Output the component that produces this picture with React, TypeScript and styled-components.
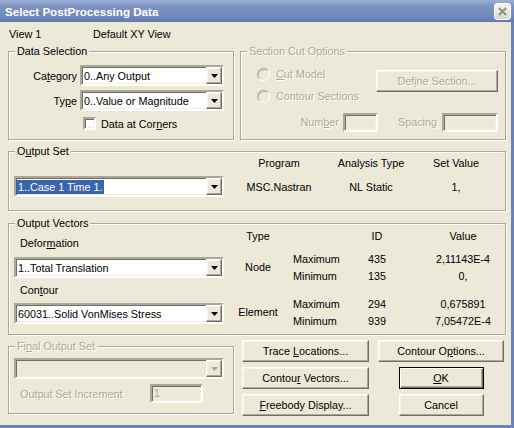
import React from "react";
import styled, { createGlobalStyle, css } from "styled-components";

const GlobalStyle = createGlobalStyle`
  html, body {
    margin: 0;
    padding: 0;
    background: #ece9d8;
  }
  body {
    font-family: "Liberation Sans", Arial, sans-serif;
    font-size: 10.8px;
    color: #000;
  }
  * {
    box-sizing: border-box;
  }
`;

const sunken = css`
  border-style: solid;
  border-width: 2px;
  border-color: #aca899 #fff #fff #aca899;
  box-shadow: inset 1px 1px 0 #716f64, inset -1px -1px 0 #f1efe2;
`;

const raised = css`
  border: 1px solid;
  border-color: #fff #716f64 #716f64 #fff;
  box-shadow: inset -1px -1px 0 #aca899, inset 1px 1px 0 #f4f3ee;
  background: #ece9d8;
`;

const disabledText = css`
  color: #aca899;
  text-shadow: 1px 1px 0 #fff;
`;

const Window = styled.div`
  width: 514px;
  height: 428px;
  display: flex;
  flex-direction: column;
  overflow: hidden;
`;

const TitleBar = styled.div`
  flex: none;
  height: 22px;
  display: flex;
  align-items: center;
  justify-content: space-between;
  padding: 0 3px 0 5px;
  background: linear-gradient(180deg, #9cafd5 0%, #7d93c2 30%, #7088ba 75%, #6179ad 100%);
  color: #fff;
  font-weight: bold;
  font-size: 11.6px;
`;

const CloseBox = styled.div`
  width: 17px;
  height: 17px;
  border: 1px solid #fff;
  border-radius: 3px;
  background: linear-gradient(180deg, #f8f7f3, #d9d6c9);
  display: flex;
  align-items: center;
  justify-content: center;
`;

const Body = styled.div`
  flex: 1;
  display: flex;
  flex-direction: column;
  padding: 0 5px 0 8px;
  background: #ece9d8;
  border-right: 3px solid #6b83b6;
  border-bottom: 3px solid #6b83b6;
`;

const ViewRow = styled.div`
  flex: none;
  height: 23px;
  display: flex;
  align-items: center;
  padding-left: 1px;
  line-height: 12px;
`;

const ViewName = styled.span`
  width: 84px;
`;

const Row = styled.div<{ $top?: number; $gap?: number }>`
  flex: none;
  display: flex;
  gap: ${(p) => p.$gap ?? 6}px;
  margin-top: ${(p) => p.$top ?? 0}px;
`;

const Group = styled.fieldset<{ $w?: number; $h: number; $top?: number; $grow?: boolean }>`
  margin: ${(p) => p.$top ?? 0}px 0 0 0;
  padding: 0;
  min-width: 0;
  flex: ${(p) => (p.$grow ? "1" : "none")};
  width: ${(p) => (p.$w ? `${p.$w}px` : "auto")};
  height: ${(p) => p.$h}px;
  border: 1px solid #aca899;
  box-shadow: inset 1px 1px 0 #fff, 1px 1px 0 #fff;
`;

const Legend = styled.legend<{ $off?: boolean }>`
  margin-left: 6px;
  padding: 0 2px;
  line-height: 12px;
  background: #ece9d8;
  ${(p) => p.$off && disabledText}
`;

const Key = styled.span`
  text-decoration: underline;
  text-underline-offset: 1px;
`;

/* ---------- combo box ---------- */

const ComboFrame = styled.div<{ $w: number; $off?: boolean }>`
  ${sunken}
  width: ${(p) => p.$w}px;
  height: 21px;
  display: flex;
  align-items: stretch;
  background: ${(p) => (p.$off ? "#ece9d8" : "#fff")};
`;

const ComboText = styled.div<{ $sel?: boolean }>`
  flex: 1;
  display: flex;
  align-items: center;
  padding-left: ${(p) => (p.$sel ? 0 : 2)}px;
  white-space: nowrap;
  overflow: hidden;
`;

const Highlight = styled.span`
  background: #3a64ac;
  color: #fff;
  line-height: 14px;
  padding: 0 1px 0 2px;
`;

const DropButton = styled.div`
  ${raised}
  width: 16px;
  display: flex;
  align-items: center;
  justify-content: center;
`;

function Combo({
  width,
  text,
  selected,
  off,
}: {
  width: number;
  text?: string;
  selected?: boolean;
  off?: boolean;
}) {
  return (
    <ComboFrame $w={width} $off={off}>
      <ComboText $sel={selected}>
        {selected ? <Highlight>{text}</Highlight> : <span>{text}</span>}
      </ComboText>
      <DropButton>
        <svg width="7" height="4" viewBox="0 0 7 4">
          <path d="M0 0h7L3.5 4z" fill={off ? "#aca899" : "#000"} />
        </svg>
      </DropButton>
    </ComboFrame>
  );
}

/* ---------- data selection ---------- */

const FieldGrid = styled.div`
  display: grid;
  grid-template-columns: 68px 144px;
  column-gap: 3px;
  row-gap: 4px;
  padding-top: 8px;
  align-items: center;
`;

const FieldLabel = styled.span`
  text-align: right;
`;

const CheckRow = styled.div`
  grid-column: 2;
  display: flex;
  align-items: center;
  gap: 5px;
  padding-left: 3px;
  margin-top: 2px;
`;

const CheckBox = styled.div`
  ${sunken}
  width: 13px;
  height: 13px;
  background: #fff;
`;

/* ---------- section cut ---------- */

const SectionGrid = styled.div`
  display: grid;
  grid-template-columns: 1fr 122px;
  grid-template-rows: 44px 20px;
  row-gap: 5px;
  padding: 6px 7px 0 16px;
`;

const RadioList = styled.div`
  display: flex;
  flex-direction: column;
`;

const RadioRow = styled.div`
  height: 22px;
  display: flex;
  align-items: center;
  gap: 6px;
  ${disabledText}
`;

const Radio = styled.div`
  width: 13px;
  height: 13px;
  border-radius: 50%;
  border: 1px solid;
  border-color: #aca899 #fff #fff #aca899;
  box-shadow: inset 1px 1px 0 #c9c6b6;
  background: #ece9d8;
`;

const Button = styled.button<{ $w?: number; $default?: boolean; $off?: boolean; $top?: number }>`
  ${raised}
  font: inherit;
  color: #000;
  padding: 0;
  margin-top: ${(p) => p.$top ?? 0}px;
  width: ${(p) => (p.$w ? `${p.$w}px` : "100%")};
  height: 22px;
  justify-self: center;
  ${(p) => p.$off && disabledText}
  ${(p) =>
    p.$default &&
    css`
      border: 1px solid #000;
      box-shadow: inset 1px 1px 0 #fff, inset -1px -1px 0 #716f64, inset -2px -2px 0 #aca899;
    `}
`;

const SpinRow = styled.div`
  grid-column: 1 / span 2;
  display: flex;
  justify-content: flex-end;
  align-items: center;
  ${disabledText}
`;

const SmallInput = styled.div<{ $w: number; $gap?: number }>`
  ${sunken}
  width: ${(p) => p.$w}px;
  height: 19px;
  margin-left: ${(p) => p.$gap ?? 4}px;
  background: #ece9d8;
  padding-left: 2px;
  line-height: 15px;
  color: #aca899;
  text-shadow: none;
`;

const Spacer = styled.span<{ $w: number }>`
  width: ${(p) => p.$w}px;
`;

/* ---------- output set ---------- */

const SetGrid = styled.div`
  display: grid;
  grid-template-columns: 210px 110px 74px 96px;
  grid-template-rows: 12px 21px;
  row-gap: 7px;
  padding-left: 5px;
  align-items: center;
  text-align: center;
  line-height: 12px;
`;

/* ---------- output vectors ---------- */

const VectorsBody = styled.div`
  display: flex;
  padding-left: 5px;
`;

const VectorStack = styled.div`
  width: 210px;
  display: flex;
  flex-direction: column;
`;

const StackLabel = styled.div<{ $top: number }>`
  margin-top: ${(p) => p.$top}px;
  padding-left: 6px;
  line-height: 12px;
`;

const StackItem = styled.div<{ $top: number }>`
  margin-top: ${(p) => p.$top}px;
`;

const ResultStack = styled.div`
  margin-left: 11px;
  display: flex;
  flex-direction: column;
`;

const ResultGrid = styled.div<{ $rows: string; $top: number }>`
  display: grid;
  grid-template-columns: 58px 59px 50px 103px;
  grid-template-rows: ${(p) => p.$rows};
  margin-top: ${(p) => p.$top}px;
  align-items: center;
  line-height: 12px;
`;

const TypeCell = styled.div<{ $span?: boolean }>`
  grid-column: 1;
  grid-row: ${(p) => (p.$span ? "1 / span 2" : "1")};
  text-align: center;
  padding-right: 12px;
`;

const KindCell = styled.div`
  grid-column: 2;
`;

const IdCell = styled.div`
  grid-column: 3;
  text-align: center;
`;

const ValueCell = styled.div`
  grid-column: 4;
  text-align: center;
  padding-left: 19px;
`;

/* ---------- bottom ---------- */

const FinalBody = styled.div`
  padding: 6px 0 0 5px;
  display: flex;
  flex-direction: column;
  gap: 5px;
`;

const IncrementRow = styled.div`
  display: flex;
  align-items: center;
  ${disabledText}
`;

const IncrementLabel = styled.span`
  width: 136px;
  padding-left: 6px;
`;

const ButtonGrid = styled.div`
  display: grid;
  grid-template-columns: 127px 126px;
  grid-template-rows: repeat(3, 22px);
  column-gap: 9px;
  row-gap: 5px;
  margin-left: 1px;
`;

const stats = [
  {
    type: "Node",
    rows: [
      { kind: "Maximum", id: "435", value: "2,11143E-4" },
      { kind: "Minimum", id: "135", value: "0," },
    ],
    top: 8,
  },
  {
    type: "Element",
    rows: [
      { kind: "Maximum", id: "294", value: "0,675891" },
      { kind: "Minimum", id: "939", value: "7,05472E-4" },
    ],
    top: 11,
  },
];

export default function App() {
  return (
    <>
      <GlobalStyle />
      <Window>
        <TitleBar>
          <span>Select PostProcessing Data</span>
          <CloseBox>
            <svg width="9" height="9" viewBox="0 0 9 9">
              <path d="M1 1L8 8M8 1L1 8" stroke="#8e8e8a" strokeWidth="2" />
            </svg>
          </CloseBox>
        </TitleBar>

        <Body>
          <ViewRow>
            <ViewName>View 1</ViewName>
            <span>Default XY View</span>
          </ViewRow>

          <Row $gap={6}>
            <Group $w={226} $h={95}>
              <Legend>Data Selection</Legend>
              <FieldGrid>
                <FieldLabel>
                  Ca<Key>t</Key>egory
                </FieldLabel>
                <Combo width={144} text="0..Any Output" />
                <FieldLabel>
                  Ty<Key>p</Key>e
                </FieldLabel>
                <Combo width={144} text="0..Value or Magnitude" />
                <CheckRow>
                  <CheckBox />
                  <span>
                    Data at Cor<Key>n</Key>ers
                  </span>
                </CheckRow>
              </FieldGrid>
            </Group>

            <Group $h={95} $grow>
              <Legend $off>Section Cut Options</Legend>
              <SectionGrid>
                <RadioList>
                  <RadioRow>
                    <Radio />
                    <span>
                      <Key>C</Key>ut Model
                    </span>
                  </RadioRow>
                  <RadioRow>
                    <Radio />
                    <span>Contour Sections</span>
                  </RadioRow>
                </RadioList>
                <Button $off $top={7}>
                  Def<Key>i</Key>ne Section...
                </Button>
                <SpinRow>
                  <span>
                    Num<Key>b</Key>er
                  </span>
                  <SmallInput $w={35} />
                  <Spacer $w={20} />
                  <span>Spacing</span>
                  <SmallInput $w={56} $gap={5} />
                </SpinRow>
              </SectionGrid>
            </Group>
          </Row>

          <Group $h={66} $top={5}>
            <Legend>
              O<Key>u</Key>tput Set
            </Legend>
            <SetGrid>
              <span />
              <span>Program</span>
              <span>Analysis Type</span>
              <span>Set Value</span>
              <Combo width={210} text="1..Case 1 Time 1." selected />
              <span>MSC.Nastran</span>
              <span>NL Static</span>
              <span>1,</span>
            </SetGrid>
          </Group>

          <Group $h={118} $top={6}>
            <Legend>Output Vectors</Legend>
            <VectorsBody>
              <VectorStack>
                <StackLabel $top={8}>
                  Defor<Key>m</Key>ation
                </StackLabel>
                <StackItem $top={8}>
                  <Combo width={210} text="1..Total Translation" />
                </StackItem>
                <StackLabel $top={6}>
                  Con<Key>t</Key>our
                </StackLabel>
                <StackItem $top={7}>
                  <Combo width={210} text="60031..Solid VonMises Stress" />
                </StackItem>
              </VectorStack>

              <ResultStack>
                <ResultGrid $rows="12px" $top={1}>
                  <TypeCell>Type</TypeCell>
                  <IdCell>ID</IdCell>
                  <ValueCell>Value</ValueCell>
                </ResultGrid>
                {stats.map((s) => (
                  <ResultGrid key={s.type} $rows="17px 17px" $top={s.top}>
                    <TypeCell $span>{s.type}</TypeCell>
                    {s.rows.map((r) => (
                      <React.Fragment key={r.kind}>
                        <KindCell>{r.kind}</KindCell>
                        <IdCell>{r.id}</IdCell>
                        <ValueCell>{r.value}</ValueCell>
                      </React.Fragment>
                    ))}
                  </ResultGrid>
                ))}
              </ResultStack>
            </VectorsBody>
          </Group>

          <Row $top={5} $gap={7}>
            <Group $w={226} $h={74}>
              <Legend $off>
                Fi<Key>n</Key>al Output Set
              </Legend>
              <FinalBody>
                <Combo width={210} off />
                <IncrementRow>
                  <IncrementLabel>Output Set Increment</IncrementLabel>
                  <SmallInput $w={53} $gap={0}>
                    1
                  </SmallInput>
                </IncrementRow>
              </FinalBody>
            </Group>

            <ButtonGrid>
              <Button>
                Trace <Key>L</Key>ocations...
              </Button>
              <Button>
                Contour O<Key>p</Key>tions...
              </Button>
              <Button>
                Contou<Key>r</Key> Vectors...
              </Button>
              <Button $w={85} $default>
                <Key>O</Key>K
              </Button>
              <Button>
                <Key>F</Key>reebody Display...
              </Button>
              <Button $w={85}>Cancel</Button>
            </ButtonGrid>
          </Row>
        </Body>
      </Window>
    </>
  );
}
